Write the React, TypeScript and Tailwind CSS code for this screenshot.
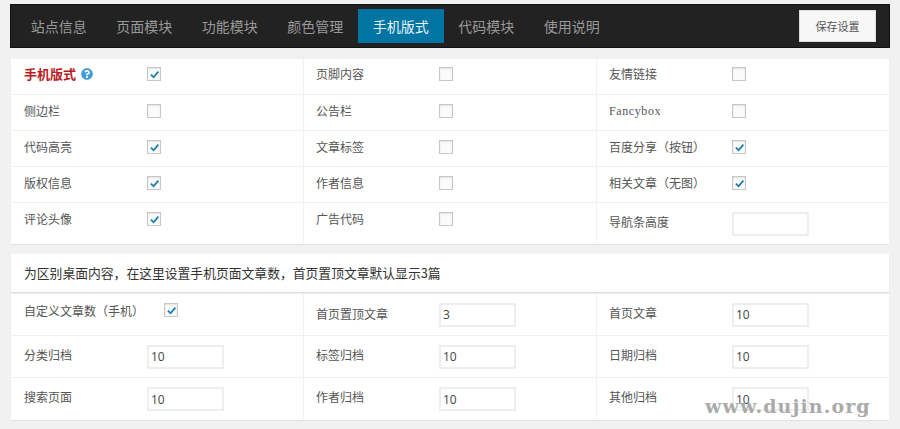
import { FaQuestionCircle } from 'react-icons/fa';

const TABS = ['站点信息', '页面模块', '功能模块', '颜色管理', '手机版式', '代码模块', '使用说明'];

type Cell = {
  label: string;
  checked?: boolean;
  value?: string;
};

const TOP_ROWS: { height: string; cells: Cell[] }[] = [
  { height: 'h-[35px] pt-[7px]', cells: [{ label: '手机版式', checked: true }, { label: '页脚内容', checked: false }, { label: '友情链接', checked: false }] },
  { height: 'h-[35px] pt-[8px]', cells: [{ label: '侧边栏', checked: false }, { label: '公告栏', checked: false }, { label: 'Fancybox', checked: false }] },
  { height: 'h-[35px] pt-[8px]', cells: [{ label: '代码高亮', checked: true }, { label: '文章标签', checked: false }, { label: '百度分享（按钮）', checked: true }] },
  { height: 'h-[35px] pt-[8px]', cells: [{ label: '版权信息', checked: true }, { label: '作者信息', checked: false }, { label: '相关文章（无图）', checked: true }] },
];

const BOTTOM_ROWS: Cell[][] = [
  [{ label: '分类归档', value: '10' }, { label: '标签归档', value: '10' }, { label: '日期归档', value: '10' }],
  [{ label: '搜索页面', value: '10' }, { label: '作者归档', value: '10' }, { label: '其他归档', value: '10' }],
];

function CheckBox({ checked }: { checked?: boolean }) {
  return (
    <span className="flex h-[14px] w-[14px] shrink-0 items-center justify-center border border-[#c4c7ca] bg-[#fbfbfb] shadow-[inset_0_1px_2px_rgba(0,0,0,0.1)]">
      {checked && (
        <svg viewBox="0 0 12 12" className="h-[11px] w-[11px]" fill="none" stroke="#1e7fb0" strokeWidth="2">
          <path d="M2 6.2 L5 9 L10.2 2.8" />
        </svg>
      )}
    </span>
  );
}

function TextBox({ value = '' }: { value?: string }) {
  return (
    <input
      readOnly
      value={value}
      className="h-[24px] w-[77px] shrink-0 border-2 border-[#eeeeee] bg-white pl-[2px] font-['Open_Sans'] text-[12px] text-[#444] outline-none"
    />
  );
}

function Label({ text, className = '' }: { text: string; className?: string }) {
  if (text === 'Fancybox') {
    return <span className={`w-[123px] shrink-0 font-['Liberation_Serif'] text-[12px] leading-[16px] tracking-[0.6px] text-[#555] ${className}`}>{text}</span>;
  }
  return <span className={`w-[123px] shrink-0 text-[12px] leading-[16px] text-[#555] ${className}`}>{text}</span>;
}

function App() {
  return (
    <div className="h-[429px] w-[900px] overflow-hidden bg-[#f1f1f1] pt-[4px] pl-[10px] font-['Noto_Sans_CJK_SC','Liberation_Sans',sans-serif]">
      <div className="flex h-[44px] w-[880px] items-center border border-[#111] bg-[#222222] pl-[5px] pr-[13px]">
        {TABS.map((tab) => (
          <div
            key={tab}
            className={
              tab === '手机版式'
                ? 'flex h-[34px] w-[85.5px] items-center justify-center bg-[#0074a2] text-[14px] text-[#e8f2f6]'
                : 'flex h-[34px] w-[85.5px] items-center justify-center text-[14px] text-[#999]'
            }
          >
            {tab}
          </div>
        ))}
        <button className="ml-auto h-[32px] w-[77px] border border-[#ddd] bg-[#f7f7f7] text-[11px] text-[#555]">
          保存设置
        </button>
      </div>

      <div className="ml-px mt-[11px] w-[878px] bg-white shadow-[0_1px_1px_rgba(0,0,0,0.06)]">
        {TOP_ROWS.map((row, i) => (
          <div key={i} className="grid grid-cols-[293px_293px_292px] border-b border-[#f1f1f1]">
            {row.cells.map((cell, j) => (
              <div key={cell.label} className={`flex items-start ${j === 0 ? 'pl-[13px]' : 'pl-[12px]'} ${row.height} ${j < 2 ? 'border-r border-[#f1f1f1]' : ''}`}>
                {i === 0 && j === 0 ? (
                  <span className="flex w-[123px] items-center gap-[5px] text-[13px] leading-[16px] font-bold text-[#b81c23]">
                    {cell.label}
                    <FaQuestionCircle className="text-[12px] text-[#3f9bd6]" />
                  </span>
                ) : (
                  <Label text={cell.label} />
                )}
                <span className="mt-[1px]">
                  <CheckBox checked={cell.checked} />
                </span>
              </div>
            ))}
          </div>
        ))}
        <div className="grid h-[41px] grid-cols-[293px_293px_292px]">
          <div className="flex items-start border-r border-[#f1f1f1] pl-[13px] pt-[8px]">
            <Label text="评论头像" />
            <span className="mt-[1px]">
              <CheckBox checked />
            </span>
          </div>
          <div className="flex items-start border-r border-[#f1f1f1] pl-[12px] pt-[8px]">
            <Label text="广告代码" />
            <span className="mt-[1px]">
              <CheckBox />
            </span>
          </div>
          <div className="flex items-start pl-[12px] pt-[9px]">
            <Label text="导航条高度" className="mt-[2px]" />
            <TextBox />
          </div>
        </div>
      </div>

      <div className="ml-px mt-[10px] flex h-[38px] w-[878px] items-center bg-white pl-[13px] text-[12.8px] text-[#333] shadow-[0_1px_1px_rgba(0,0,0,0.08)]">
        为区别桌面内容，在这里设置手机页面文章数，首页置顶文章默认显示3篇
      </div>

      <div className="ml-px mt-[2px] w-[878px] bg-white shadow-[0_1px_1px_rgba(0,0,0,0.06)]">
        <div className="grid h-[42px] grid-cols-[293px_293px_292px] border-b border-[#f1f1f1]">
          <div className="flex items-start border-r border-[#f1f1f1] pl-[13px] pt-[9px]">
            <span className="w-[140px] text-[12px] leading-[16px] text-[#555]">自定义文章数（手机）</span>
            <CheckBox checked />
          </div>
          <div className="flex items-center border-r border-[#f1f1f1] pl-[12px]">
            <Label text="首页置顶文章" className="-mt-[2px]" />
            <TextBox value="3" />
          </div>
          <div className="flex items-center pl-[12px]">
            <Label text="首页文章" className="-mt-[4px]" />
            <TextBox value="10" />
          </div>
        </div>
        {BOTTOM_ROWS.map((row, i) => (
          <div key={i} className={`grid h-[42px] grid-cols-[293px_293px_292px] ${i === 0 ? 'border-b border-[#f1f1f1]' : ''}`}>
            {row.map((cell, j) => (
              <div key={cell.label} className={`flex items-center ${j === 0 ? 'pl-[13px]' : 'pl-[12px]'} ${j < 2 ? 'border-r border-[#f1f1f1]' : ''}`}>
                <Label text={cell.label} className="-mt-[4px]" />
                <TextBox value={cell.value} />
              </div>
            ))}
          </div>
        ))}
      </div>

      <div className="absolute left-[705px] top-[394px] font-['DejaVu_Serif'] text-[19px] leading-[24px] font-bold tracking-[1.1px] text-[#aaaaaa]">
        www.dujin.org
      </div>
    </div>
  );
}

export default App;
